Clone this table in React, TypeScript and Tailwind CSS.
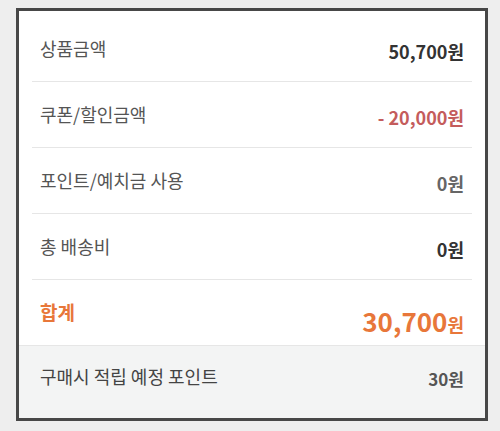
import React from "react";

const font = { fontFamily: '"Noto Sans CJK KR", "Noto Sans", sans-serif' };

function Row({ label, value, valueClass }: { label: string; value: string; valueClass: string }) {
  return (
    <div className="flex h-[66px] items-center justify-between border-b border-[#e6e6e6] px-2">
      <span className="text-[18px] text-[#555555]">{label}</span>
      <span className={`mt-[6px] font-bold text-[18px] ${valueClass}`}>{value}</span>
    </div>
  );
}

export default function App() {
  return (
    <div className="min-h-[431px] w-[500px] bg-[#eeeeee] pl-4 pt-2" style={font}>
      <div className="w-[472px] h-[413px] border-[3px] border-[#474747] bg-white flex flex-col">
        <div className="px-[13px] pt-[5px]">
          <Row label="상품금액" value="50,700원" valueClass="text-[#333333]" />
          <Row label="쿠폰/할인금액" value="- 20,000원" valueClass="text-[#c45c5c]" />
          <Row label="포인트/예치금 사용" value="0원" valueClass="text-[#666666]" />
          <Row label="총 배송비" value="0원" valueClass="text-[#333333]" />
          <div className="flex h-[65px] items-center justify-between px-2">
            <span className="text-[19px] font-bold text-[#e8773a]">합계</span>
            <span className="mt-[16px] font-bold text-[#e8773a] leading-none">
              <span className="text-[26px]">30,700</span>
              <span className="text-[18px]">원</span>
            </span>
          </div>
        </div>
        <div className="flex-1 border-t border-[#e6e6e6] bg-[#f3f4f4] px-[13px]">
          <div className="flex items-center justify-between px-2 pt-[16px]">
            <span className="text-[18px] text-[#444444]">구매시 적립 예정 포인트</span>
            <span className="mt-[4px] text-[17px] font-bold text-[#555555]">30원</span>
          </div>
        </div>
      </div>
    </div>
  );
}
